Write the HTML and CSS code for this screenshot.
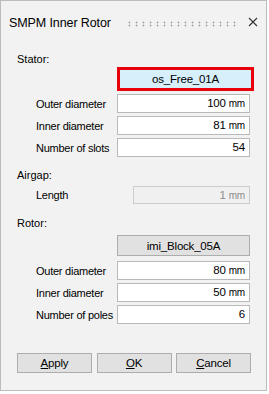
FILE: index.html
```html
<!DOCTYPE html>
<html lang="en">
<head>
<meta charset="UTF-8" />
<meta name="viewport" content="width=device-width, initial-scale=1" />
<title>SMPM Inner Rotor</title>
<link rel="stylesheet" href="styles.css">
</head>
<body>

<div class="dialog">
  <div class="titlebar">
    <span class="title">SMPM Inner Rotor</span>
    <span class="grip"></span>
    <span class="close">
      <svg width="10" height="10" viewBox="0 0 10 10"><path d="M1 1 L9 9 M9 1 L1 9" stroke="#333" stroke-width="1.1" fill="none"/></svg>
    </span>
  </div>

  <div class="content">
    <div class="group-title">Stator:</div>
    <div class="row pick-row stator-pick">
      <button class="pick selected">os_Free_01A</button>
    </div>
    <div class="row first">
      <span class="label">Outer diameter</span>
      <div class="field">100 <span class="unit">mm</span></div>
    </div>
    <div class="row">
      <span class="label">Inner diameter</span>
      <div class="field">81 <span class="unit">mm</span></div>
    </div>
    <div class="row">
      <span class="label">Number of slots</span>
      <div class="field">54</div>
    </div>

    <div class="group-title airgap">Airgap:</div>
    <div class="row length-row">
      <span class="label">Length</span>
      <div class="field disabled short">1 <span class="unit">mm</span></div>
    </div>

    <div class="group-title rotor">Rotor:</div>
    <div class="row pick-row">
      <button class="pick">imi_Block_05A</button>
    </div>
    <div class="row first rotor-first">
      <span class="label">Outer diameter</span>
      <div class="field">80 <span class="unit">mm</span></div>
    </div>
    <div class="row">
      <span class="label">Inner diameter</span>
      <div class="field">50 <span class="unit">mm</span></div>
    </div>
    <div class="row">
      <span class="label">Number of poles</span>
      <div class="field">6</div>
    </div>

    <div class="actions">
      <button class="btn"><u>A</u>pply</button>
      <button class="btn"><u>O</u>K</button>
      <button class="btn"><u>C</u>ancel</button>
    </div>
  </div>
</div>

</body>
</html>
```

FILE: styles.css
```css
body {
  margin: 0;
  background: #ffffff;
  font-family: "Liberation Sans", Arial, sans-serif;
  color: #000;
}
.dialog {
  width: 267px;
  height: 391px;
  box-sizing: border-box;
  border: 1px solid #bcbcbc;
  background: #f2f2f2;
}
.titlebar {
  display: flex;
  align-items: center;
  height: 40px;
  padding: 0 0 0 8px;
}
.title {
  font-size: 12.5px;
  letter-spacing: -0.1px;
  margin-top: 3px;
}
.grip {
  width: 112px;
  height: 6px;
  margin: 6px 0 0 15px;
  background: radial-gradient(circle, #999 0.8px, transparent 1.1px) 0 0 / 7px 3px repeat;
}
.close {
  display: flex;
  margin: 2px 0 0 10px;
}
.content {
  padding: 0 0 0 16px;
}
.group-title {
  font-size: 11px;
  line-height: 16px;
  margin-top: 10px;
}
.group-title.airgap {
  margin-top: 10px;
}
.group-title.rotor {
  margin-top: 11px;
}
.row {
  display: flex;
  align-items: center;
  height: 19px;
  margin-top: 3px;
  padding-left: 19px;
}
.row.rotor-first {
  margin-top: 5px;
}
.label {
  font-size: 11px;
  letter-spacing: -0.25px;
  width: 81px;
  white-space: nowrap;
}
.field {
  box-sizing: border-box;
  width: 133px;
  height: 19px;
  border: 1px solid #b9b9b9;
  background: #fff;
  font-size: 11.5px;
  text-align: right;
  padding: 2px 4px 0 0;
  letter-spacing: -0.2px;
}
.unit {
  font-size: 10px;
}
.field.disabled {
  background: #f0f0f0;
  border-color: #cccccc;
  color: #8c8c8c;
}
.field.short {
  width: 117px;
  margin-left: 16px;
  height: 18px;
}
.length-row {
  margin-top: 2px;
}
.pick-row {
  height: auto;
  padding-left: 100px;
  margin-top: 4px;
}
.pick-row.stator-pick {
  margin-top: 0;
}
.pick {
  box-sizing: border-box;
  width: 133px;
  height: 21px;
  border: 1px solid #adadad;
  background: #e1e1e1;
  font-family: inherit;
  font-size: 11.5px;
  letter-spacing: -0.2px;
  color: #000;
  padding: 0;
}
.pick.selected {
  width: 137px;
  height: 24px;
  border: 3px solid #e8000b;
  background: #d6effb;
}
.actions {
  display: flex;
  justify-content: space-between;
  width: 234px;
  margin-top: 29px;
}
.btn {
  box-sizing: border-box;
  width: 75px;
  height: 20px;
  border: 1px solid #adadad;
  background: #e1e1e1;
  font-family: inherit;
  font-size: 11.5px;
  letter-spacing: -0.2px;
  color: #000;
  padding: 0;
}
```
